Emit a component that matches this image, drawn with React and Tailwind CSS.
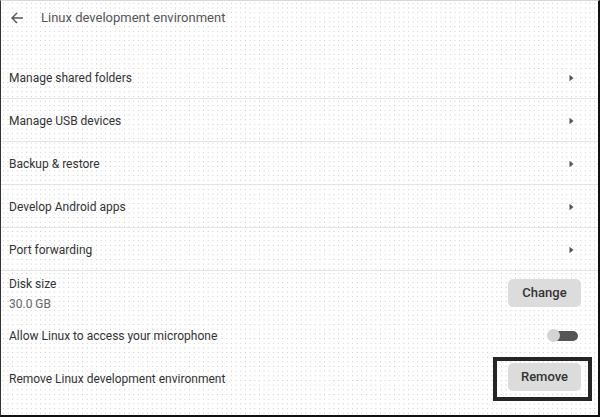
import React from "react";

const linkRows = [
  "Manage shared folders",
  "Manage USB devices",
  "Backup & restore",
  "Develop Android apps",
  "Port forwarding",
];

function BackArrow() {
  return (
    <svg width="14" height="14" viewBox="0 0 14 14" fill="none" className="text-[#555]">
      <path d="M13 7H2M7 2L2 7l5 5" stroke="currentColor" strokeWidth="1.4" />
    </svg>
  );
}

function Chevron() {
  return (
    <svg width="5" height="8" viewBox="0 0 5 8" className="text-[#555]">
      <path d="M0.5 0.8L4.5 4L0.5 7.2Z" fill="currentColor" />
    </svg>
  );
}

function LinkRow({ label }) {
  return (
    <div className="flex h-[43px] items-center justify-between border-b border-[#e4e4e4] pl-2 pr-[24px] pt-[2px]">
      <span className="text-[12px] text-[#333]">{label}</span>
      <Chevron />
    </div>
  );
}

export default function App() {
  return (
    <div
      className="h-[417px] w-[600px] overflow-hidden border-t border-l border-r-2 border-b-2 border-t-[#d8d8d8] border-l-[#333] border-r-[#111] border-b-[#111] bg-white bg-[radial-gradient(circle,#c6c6c6_0.55px,transparent_0.8px)] bg-[length:4.67px_4.67px]"
      style={{ fontFamily: "Roboto, 'Liberation Sans', sans-serif" }}
    >
      <div className="flex h-[34px] items-center gap-[17px] pl-[9px]">
        <BackArrow />
        <span className="text-[13px] text-[#555]">Linux development environment</span>
      </div>

      <div className="mt-[21px]">
        {linkRows.map((label) => (
          <LinkRow key={label} label={label} />
        ))}

        <div className="flex h-[43px] items-center justify-between pl-2 pr-[17px]">
          <div className="flex flex-col gap-[4px] pt-[2px] leading-[16px]">
            <span className="text-[12px] text-[#333]">Disk size</span>
            <span className="text-[12px] text-[#666]">30.0 GB</span>
          </div>
          <button
            type="button"
            className="h-[28px] w-[73px] rounded-[5px] bg-[#dcdcdc] text-[13px] font-medium text-[#333]"
          >
            Change
          </button>
        </div>

        <div className="flex h-[43px] items-center justify-between pl-2 pr-[20px]">
          <span className="text-[12px] text-[#333]">Allow Linux to access your microphone</span>
          <div className="relative h-[13px] w-[31px]">
            <div className="absolute right-0 top-[1.5px] h-[10px] w-[25px] rounded-full bg-[#555]" />
            <div className="absolute left-0 top-0 h-[13px] w-[13px] rounded-full bg-[#d4d4d4]" />
          </div>
        </div>

        <div className="flex h-[44px] items-center justify-between pl-2 pr-[6px]">
          <span className="text-[12px] text-[#333]">Remove Linux development environment</span>
          <div className="border-4 border-[#262626] pb-[6px] pl-[11px] pr-[7px] pt-[2px]">
            <button
              type="button"
              className="h-[28px] w-[73px] rounded-[5px] bg-[#dcdcdc] text-[13px] font-medium text-[#333]"
            >
              Remove
            </button>
          </div>
        </div>
      </div>
    </div>
  );
}
